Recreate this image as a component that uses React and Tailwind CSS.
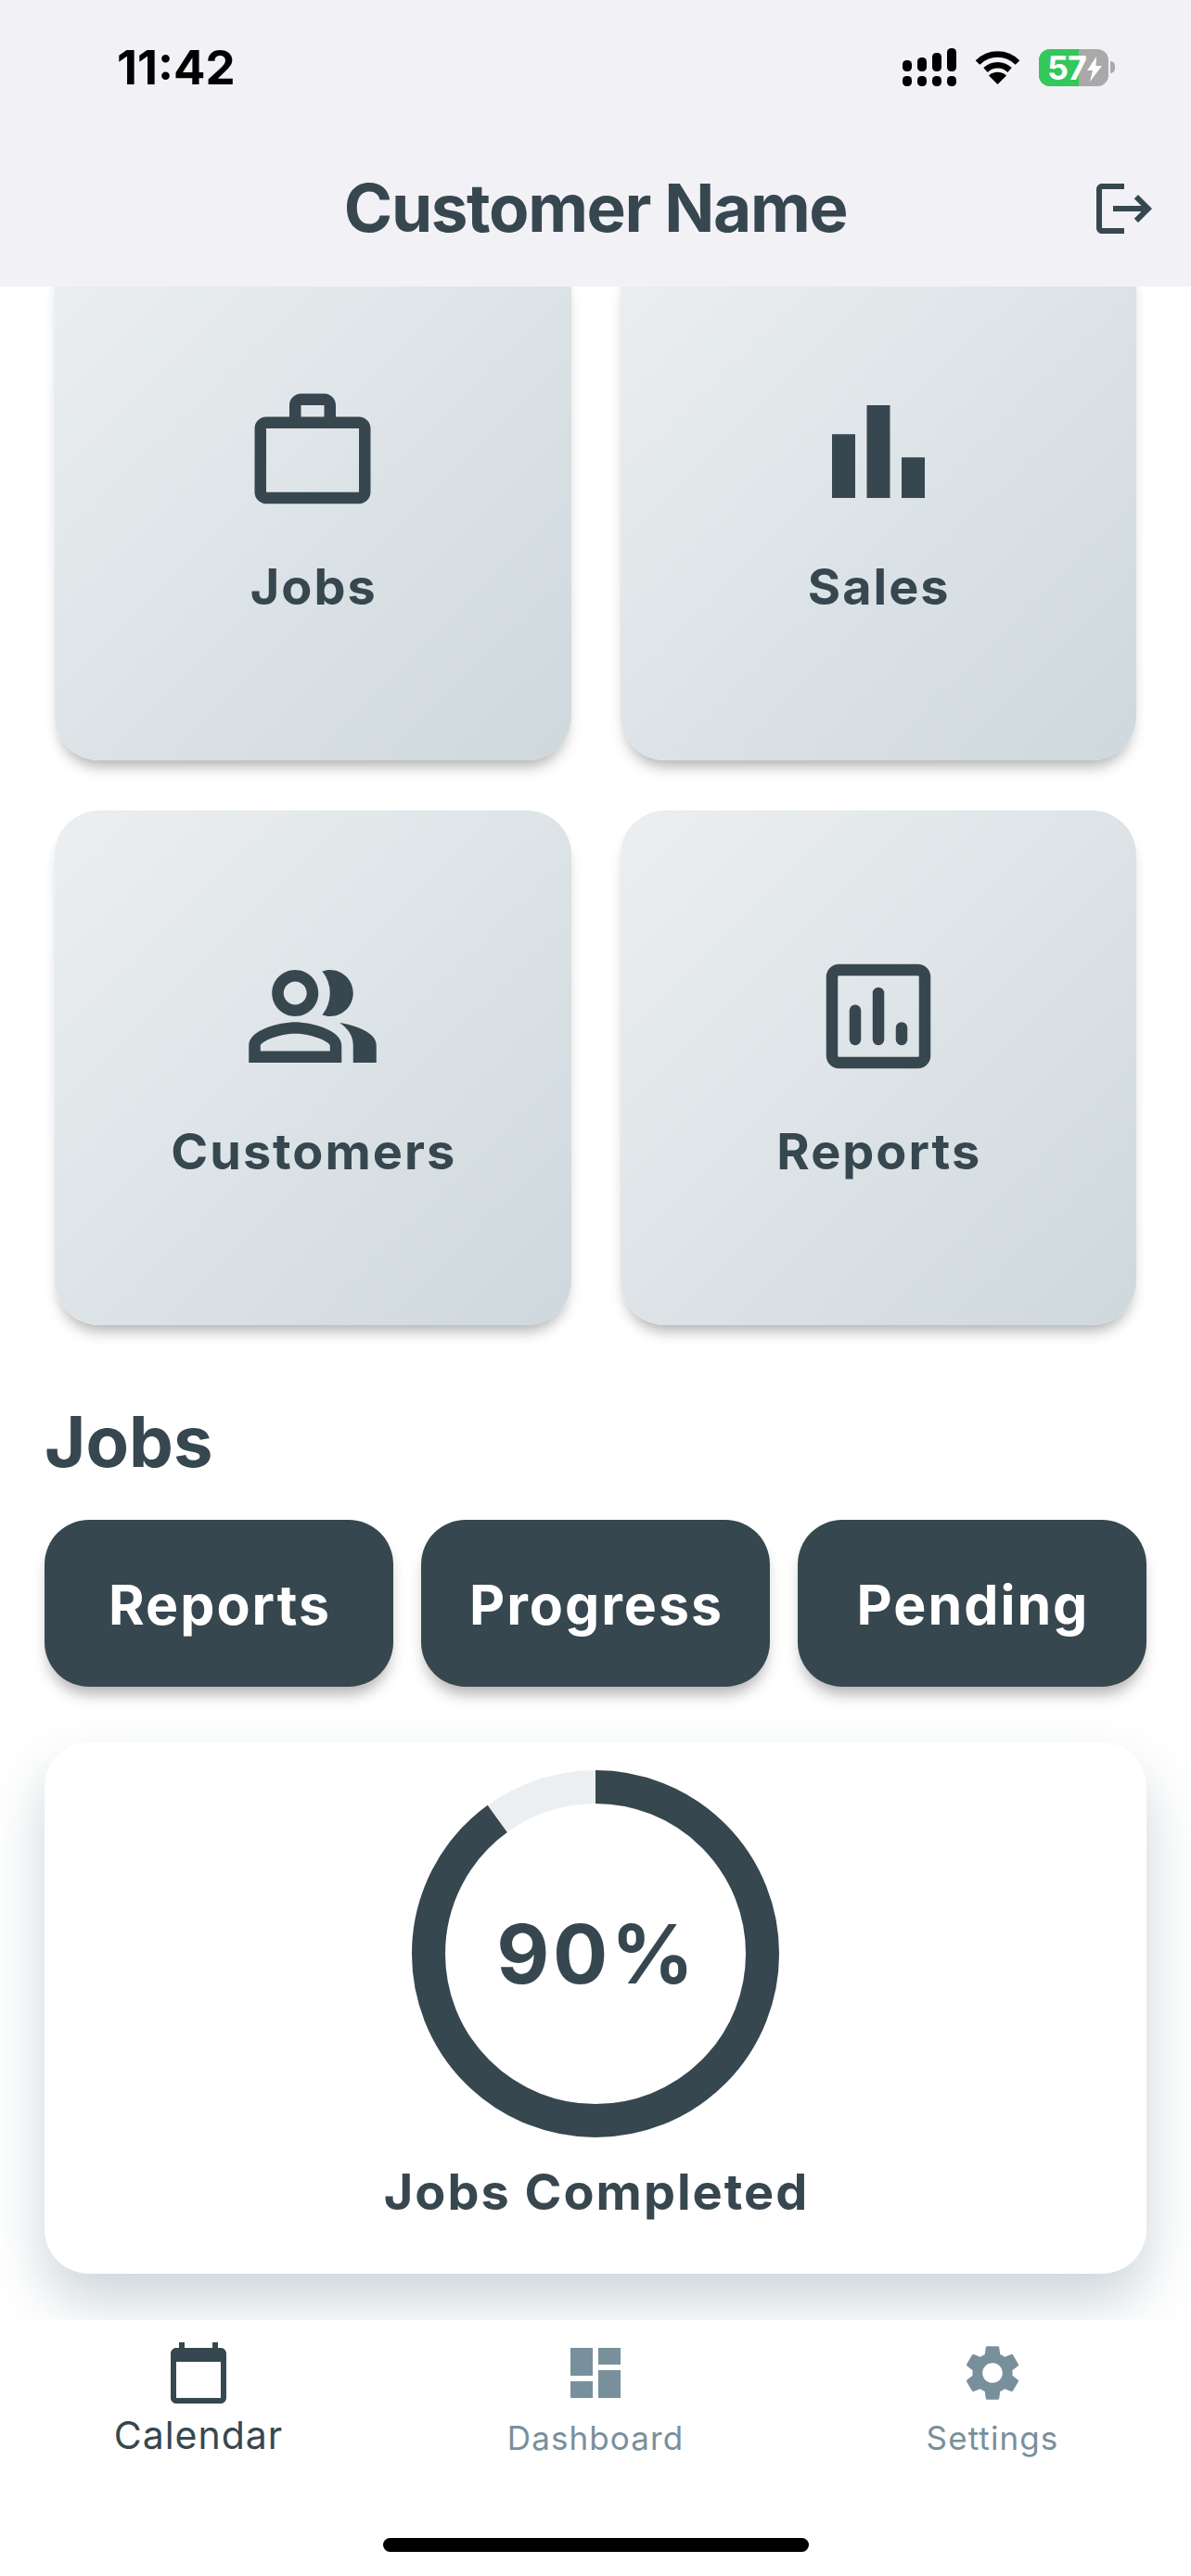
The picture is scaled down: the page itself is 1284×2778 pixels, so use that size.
import React from "react";
import {
  MdWorkOutline,
  MdOutlinePeopleAlt,
  MdDashboard,
  MdSettings,
} from "react-icons/md";

function BarsIcon({ className }) {
  return (
    <svg viewBox="0 0 24 24" fill="currentColor" className={className}>
      <path d="M4 9h4v11H4zm12 4h4v7h-4zm-6-9h4v16h-4z" />
    </svg>
  );
}

function ReportIcon({ className }) {
  return (
    <svg viewBox="0 0 24 24" fill="none" stroke="currentColor" strokeWidth="2" className={className}>
      <rect x="4" y="4" width="16" height="16" rx="1.2" />
      <path strokeLinecap="round" d="M8 11v5M12 8v8M16 14v2" />
    </svg>
  );
}

function LogoutIcon({ className }) {
  return (
    <svg viewBox="0 0 24 24" fill="currentColor" className={className}>
      <path d="M17 7l-1.41 1.41L18.17 11H8v2h10.17l-2.58 2.58L17 17l5-5zM4 5h8V3H4c-1.1 0-2 .9-2 2v14c0 1.1.9 2 2 2h8v-2H4V5z" />
    </svg>
  );
}

function CalendarIcon({ className }) {
  return (
    <svg viewBox="0 0 24 24" fill="currentColor" className={className}>
      <path d="M20 3h-1V1h-2v2H7V1H5v2H4c-1.1 0-2 .9-2 2v16c0 1.1.9 2 2 2h16c1.1 0 2-.9 2-2V5c0-1.1-.9-2-2-2zm0 18H4V8h16v13z" />
    </svg>
  );
}

function SignalIcon() {
  return (
    <svg viewBox="0 0 58 41" fill="#000" className="w-[58px] h-[41px]">
      <rect x="0" y="13" width="10" height="12" rx="4.5" />
      <rect x="16" y="10" width="10" height="15" rx="4.5" />
      <rect x="32" y="5" width="10" height="20" rx="4.5" />
      <rect x="48" y="0" width="10" height="25" rx="4.5" />
      <rect x="0" y="30" width="10" height="11" rx="4.5" />
      <rect x="16" y="30" width="10" height="11" rx="4.5" />
      <rect x="32" y="30" width="10" height="11" rx="4.5" />
      <rect x="48" y="30" width="10" height="11" rx="4.5" />
    </svg>
  );
}

function WifiIcon() {
  return (
    <svg viewBox="0 0 49 37" className="w-[49px] h-[37px]">
      <path d="M3 13.5C15 1.5 34 1.5 46 13.5" fill="none" stroke="#000" strokeWidth="6.5" />
      <path d="M11.5 21.5C19 14.5 30 14.5 37.5 21.5" fill="none" stroke="#000" strokeWidth="6.5" />
      <path d="M24.5 37L15 27.5C20 22.5 29 22.5 34 27.5Z" fill="#000" />
    </svg>
  );
}

function BatteryIcon() {
  return (
    <div className="flex items-center">
      <div className="relative flex w-[75px] h-10 rounded-xl bg-[#a9a9a9]">
        <div className="w-[43px] h-full rounded-l-xl bg-[#34c759]" />
        <span className="absolute left-[9px] top-0 text-[36px] leading-10 font-bold tracking-[-1px] text-white">57</span>
        <svg viewBox="0 0 16 27" fill="#fff" className="absolute left-[52px] top-2 w-4 h-[27px]">
          <path d="M10 0L0 15h6l-3 12L16 10H9.5z" />
        </svg>
      </div>
      <div className="ml-0.5 w-[5px] h-[13px] rounded-r-full bg-[#a9a9a9]" />
    </div>
  );
}

function MenuCard({ icon, label }) {
  return (
    <div className="h-[555px] rounded-[48px] bg-linear-to-br from-[#eceff1] to-[#ced8dd] shadow-[0_12px_16px_-6px_rgba(0,0,0,0.32)] flex flex-col items-center pt-[147px]">
      {icon}
      <span className="mt-[38px] pl-[2px] text-[54px] leading-[66px] font-bold tracking-[2px] text-[#37474f]">{label}</span>
    </div>
  );
}

function TabItem({ icon, label, active }) {
  return (
    <div className={`flex flex-col items-center ${active ? "text-[#37474f]" : "text-[#78909c]"}`}>
      {icon}
      <span className={active ? "mt-[6px] text-[41px] leading-[50px] tracking-[1px]" : "mt-[12px] text-[35px] leading-[44px] tracking-[1.1px]"}>
        {label}
      </span>
    </div>
  );
}

export default function App() {
  const iconClass = "w-[150px] h-[150px] text-[#37474f]";

  return (
    <div className="w-[1284px] h-[2778px] flex flex-col bg-white overflow-hidden [font-family:Inter,sans-serif]">
      <header className="shrink-0 h-[309px] bg-[#f2f1f6] relative z-10">
        <div className="h-[144px] flex items-start justify-between pl-[126px] pr-[82px] pt-[53px]">
          <span className="text-[51px] leading-[40px] font-bold text-black">11:42</span>
          <div className="flex items-center gap-5 mt-[-1px]">
            <SignalIcon />
            <WifiIcon />
            <BatteryIcon />
          </div>
        </div>
        <div className="relative flex justify-center pt-[45px]">
          <h1 className="text-[71px] leading-[70px] font-bold tracking-[-1.4px] text-[#37474f]">Customer Name</h1>
          <LogoutIcon className="absolute right-9 top-[45px] w-[72px] h-[72px] text-[#37474f]" />
        </div>
      </header>

      <main className="flex-1 min-h-0 overflow-hidden px-12">
        <div className="mt-[-44px] mx-[11px] grid grid-cols-2 gap-x-[53px] gap-y-[54px]">
          <MenuCard icon={<MdWorkOutline className={iconClass} />} label="Jobs" />
          <MenuCard icon={<BarsIcon className={iconClass} />} label="Sales" />
          <MenuCard icon={<MdOutlinePeopleAlt className={iconClass} />} label="Customers" />
          <MenuCard icon={<ReportIcon className={iconClass} />} label="Reports" />
        </div>

        <h2 className="mt-[78px] text-[76px] leading-[94px] font-bold text-[#37474f]">Jobs</h2>

        <div className="mt-[38px] grid grid-cols-3 gap-[30px]">
          {["Reports", "Progress", "Pending"].map((name) => (
            <button
              key={name}
              className="h-[180px] pt-[5px] pl-[2px] rounded-[48px] bg-[#37474f] text-white text-[59px] font-bold tracking-[2px] shadow-[0_12px_16px_-4px_rgba(0,0,0,0.3)]"
            >
              {name}
            </button>
          ))}
        </div>

        <section className="mt-[60px] h-[573px] rounded-[48px] bg-white shadow-[0_30px_60px_rgba(96,125,139,0.32)] flex flex-col items-center pt-[30px]">
          <div className="relative w-[396px] h-[396px]">
            <svg viewBox="0 0 396 396" className="w-full h-full -rotate-90" fill="none">
              <circle cx="198" cy="198" r="180" stroke="#eceff1" strokeWidth="36" />
              <circle cx="198" cy="198" r="180" stroke="#37474f" strokeWidth="36" pathLength="100" strokeDasharray="90 100" />
            </svg>
            <span className="absolute inset-0 flex items-center justify-center pl-[3px] text-[88px] font-bold tracking-[3.5px] text-[#37474f]">90%</span>
          </div>
          <p className="mt-[26px] pl-[2px] text-[54px] leading-[66px] font-bold tracking-[2px] text-[#37474f]">Jobs Completed</p>
        </section>
      </main>

      <nav className="shrink-0 h-[276px] bg-white relative z-10 flex flex-col">
        <div className="grid grid-cols-3 pt-[21px]">
          <TabItem active icon={<CalendarIcon className="w-[72px] h-[72px]" />} label="Calendar" />
          <TabItem icon={<MdDashboard className="w-[72px] h-[72px]" />} label="Dashboard" />
          <TabItem icon={<MdSettings className="w-[72px] h-[72px]" />} label="Settings" />
        </div>
        <div className="mt-auto mb-[26px] mx-auto w-[459px] h-[15px] rounded-full bg-black" />
      </nav>
    </div>
  );
}
